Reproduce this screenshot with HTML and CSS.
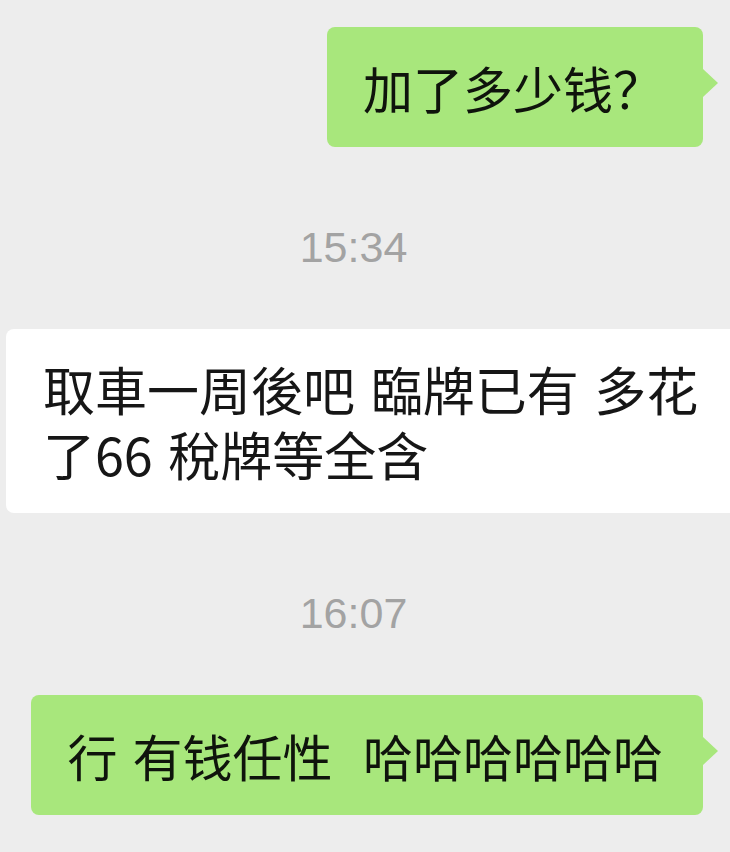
FILE: index.html
```html
<!DOCTYPE html>
<html lang="zh">
<head>
  <meta charset="UTF-8">
  <meta name="viewport" content="width=device-width, initial-scale=1.0">
  <link rel="stylesheet" href="styles.css">
  <title>聊天</title>
</head>
<body>
  <div class="chat">
    <div class="row mine">
      <div class="bubble green">加了多少钱？</div>
    </div>

    <div class="time">15:34</div>

    <div class="row theirs">
      <div class="bubble white">取車一周後吧 臨牌已有 多花了66 稅牌等全含</div>
    </div>

    <div class="time">16:07</div>

    <div class="row mine">
      <div class="bubble green">行 有钱任性&nbsp; 哈哈哈哈哈哈</div>
    </div>
  </div>
</body>
</html>
```

FILE: styles.css
```css
body {
  margin: 0;
  background: #ededed;
  font-family: "Noto Sans CJK SC", "Noto Sans", sans-serif;
  overflow: hidden;
}

.chat {
  padding-top: 27px;
}

.row {
  display: flex;
}

.row.mine {
  justify-content: flex-end;
  padding-right: 27px;
}

.row.theirs {
  padding-left: 6px;
  margin-right: -30px;
}

.bubble {
  position: relative;
  font-size: 50px;
  line-height: 64px;
  word-spacing: 4px;
  padding: 28px 40px 28px 36px;
  border-radius: 8px;
  color: #161616;
}

.bubble.green {
  background: #a8e77c;
  color: #0f140c;
}

.bubble.green::after {
  content: "";
  position: absolute;
  right: -15px;
  top: 42px;
  border-left: 15px solid #a8e77c;
  border-top: 14px solid transparent;
  border-bottom: 14px solid transparent;
}

.bubble.white {
  background: #ffffff;
  flex: 1;
  font-size: 52px;
  line-height: 65px;
  padding: 27px 40px 27px 37px;
}

.time {
  font-family: "Liberation Sans", Arial, sans-serif;
  font-size: 43px;
  line-height: 50px;
  color: #a3a3a3;
  text-align: center;
  margin: 75px 0 57px;
  padding-right: 23px;
}
```
